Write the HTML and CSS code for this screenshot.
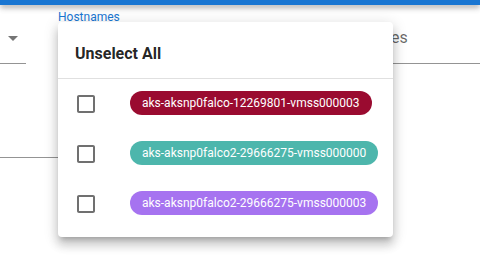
FILE: index.html
```html
<!DOCTYPE html>
<html lang="en">
<head>
    <meta charset="UTF-8">
    <meta name="viewport" content="width=device-width, initial-scale=1.0">
    <title>Hosts filter</title>
    <link rel="stylesheet" href="styles.css">
</head>
<body>
    <div class="appbar"></div>
    <div class="filters">
        <div class="field">
            <div class="field-label"></div>
            <div class="field-input select-input">
                <svg class="arrow" width="24" height="24" viewBox="0 0 24 24"><path d="M7 10l5 5 5-5z"/></svg>
            </div>
        </div>
        <div class="field">
            <div class="field-label focused">Hostnames</div>
            <div class="field-input"></div>
        </div>
        <div class="field">
            <div class="field-label"></div>
            <div class="field-input"><span class="placeholder">Namespaces</span></div>
        </div>
    </div>
    <div class="filters second">
        <div class="field wide">
            <div class="field-input"></div>
        </div>
    </div>

    <div class="popover">
        <div class="popover-head">Unselect All</div>
        <ul class="host-list">
            <li class="host-row">
                <svg class="checkbox" width="24" height="24" viewBox="0 0 24 24"><path d="M19 5v14H5V5h14m0-2H5c-1.11 0-2 .9-2 2v14c0 1.1.89 2 2 2h14c1.1 0 2-.9 2-2V5c0-1.1-.89-2-2-2z"/></svg>
                <span class="chip chip-red">aks-aksnp0falco-12269801-vmss000003</span>
            </li>
            <li class="host-row">
                <svg class="checkbox" width="24" height="24" viewBox="0 0 24 24"><path d="M19 5v14H5V5h14m0-2H5c-1.11 0-2 .9-2 2v14c0 1.1.89 2 2 2h14c1.1 0 2-.9 2-2V5c0-1.1-.89-2-2-2z"/></svg>
                <span class="chip chip-teal">aks-aksnp0falco2-29666275-vmss000000</span>
            </li>
            <li class="host-row">
                <svg class="checkbox" width="24" height="24" viewBox="0 0 24 24"><path d="M19 5v14H5V5h14m0-2H5c-1.11 0-2 .9-2 2v14c0 1.1.89 2 2 2h14c1.1 0 2-.9 2-2V5c0-1.1-.89-2-2-2z"/></svg>
                <span class="chip chip-purple">aks-aksnp0falco2-29666275-vmss000003</span>
            </li>
        </ul>
    </div>
</body>
</html>
```

FILE: styles.css
```css
:root {
    --primary: #1976d2;
    --text: rgba(0, 0, 0, 0.87);
    --muted: rgba(0, 0, 0, 0.6);
    --line: rgba(0, 0, 0, 0.42);
    --divider: #e0e0e0;
}
* {
    box-sizing: border-box;
    margin: 0;
    padding: 0;
}
body {
    font-family: Roboto, 'Liberation Sans', sans-serif;
    color: var(--text);
    background: #fff;
    width: 480px;
    height: 270px;
    overflow: hidden;
}
.appbar {
    height: 5px;
    background: var(--primary);
    box-shadow: 0 2px 4px -1px rgba(0,0,0,0.2), 0 4px 5px 0 rgba(0,0,0,0.14), 0 1px 10px 0 rgba(0,0,0,0.12);
}
.filters {
    display: grid;
    grid-template-columns: 26px 224px minmax(0, 1fr);
    column-gap: 32px;
}
.filters.second {
    margin-top: 54px;
}
.field {
    min-width: 0;
    overflow: hidden;
}
.field.wide {
    grid-column: 1 / 3;
}
.field-label {
    height: 14px;
    margin-top: 5px;
    font-size: 12px;
    line-height: 14px;
    white-space: nowrap;
}
.field-label.focused {
    color: var(--primary);
}
.field-input {
    height: 40px;
    border-bottom: 1px solid var(--line);
    display: flex;
    align-items: flex-start;
}
.select-input {
    justify-content: flex-end;
    padding-top: 2px;
}
.arrow {
    fill: rgba(0, 0, 0, 0.54);
    margin-right: 1px;
}
.placeholder {
    font-size: 16px;
    line-height: 24px;
    padding-top: 2px;
    color: var(--muted);
    white-space: nowrap;
}
.popover {
    position: absolute;
    left: 58px;
    top: 22px;
    width: 335px;
    background: #fff;
    border-radius: 4px;
    padding-bottom: 8px;
    box-shadow: 0 5px 5px -3px rgba(0,0,0,0.2), 0 8px 10px 1px rgba(0,0,0,0.14), 0 3px 14px 2px rgba(0,0,0,0.12);
}
.popover-head {
    padding: 20px 17px 12px;
    font-size: 16px;
    font-weight: 700;
    line-height: 24px;
    border-bottom: 1px solid var(--divider);
}
.host-list {
    list-style: none;
}
.host-row {
    height: 50px;
    display: flex;
    align-items: center;
    gap: 32px;
    padding-left: 16px;
}
.checkbox {
    fill: #707070;
    flex: none;
}
.chip {
    height: 24px;
    line-height: 24px;
    padding: 0 12px;
    border-radius: 12px;
    font-size: 12px;
    color: #fff;
    white-space: nowrap;
    margin-top: -2px;
}
.chip-red {
    background: #9a0b30;
}
.chip-teal {
    background: #4db6ac;
}
.chip-purple {
    background: #a673f0;
}
```
